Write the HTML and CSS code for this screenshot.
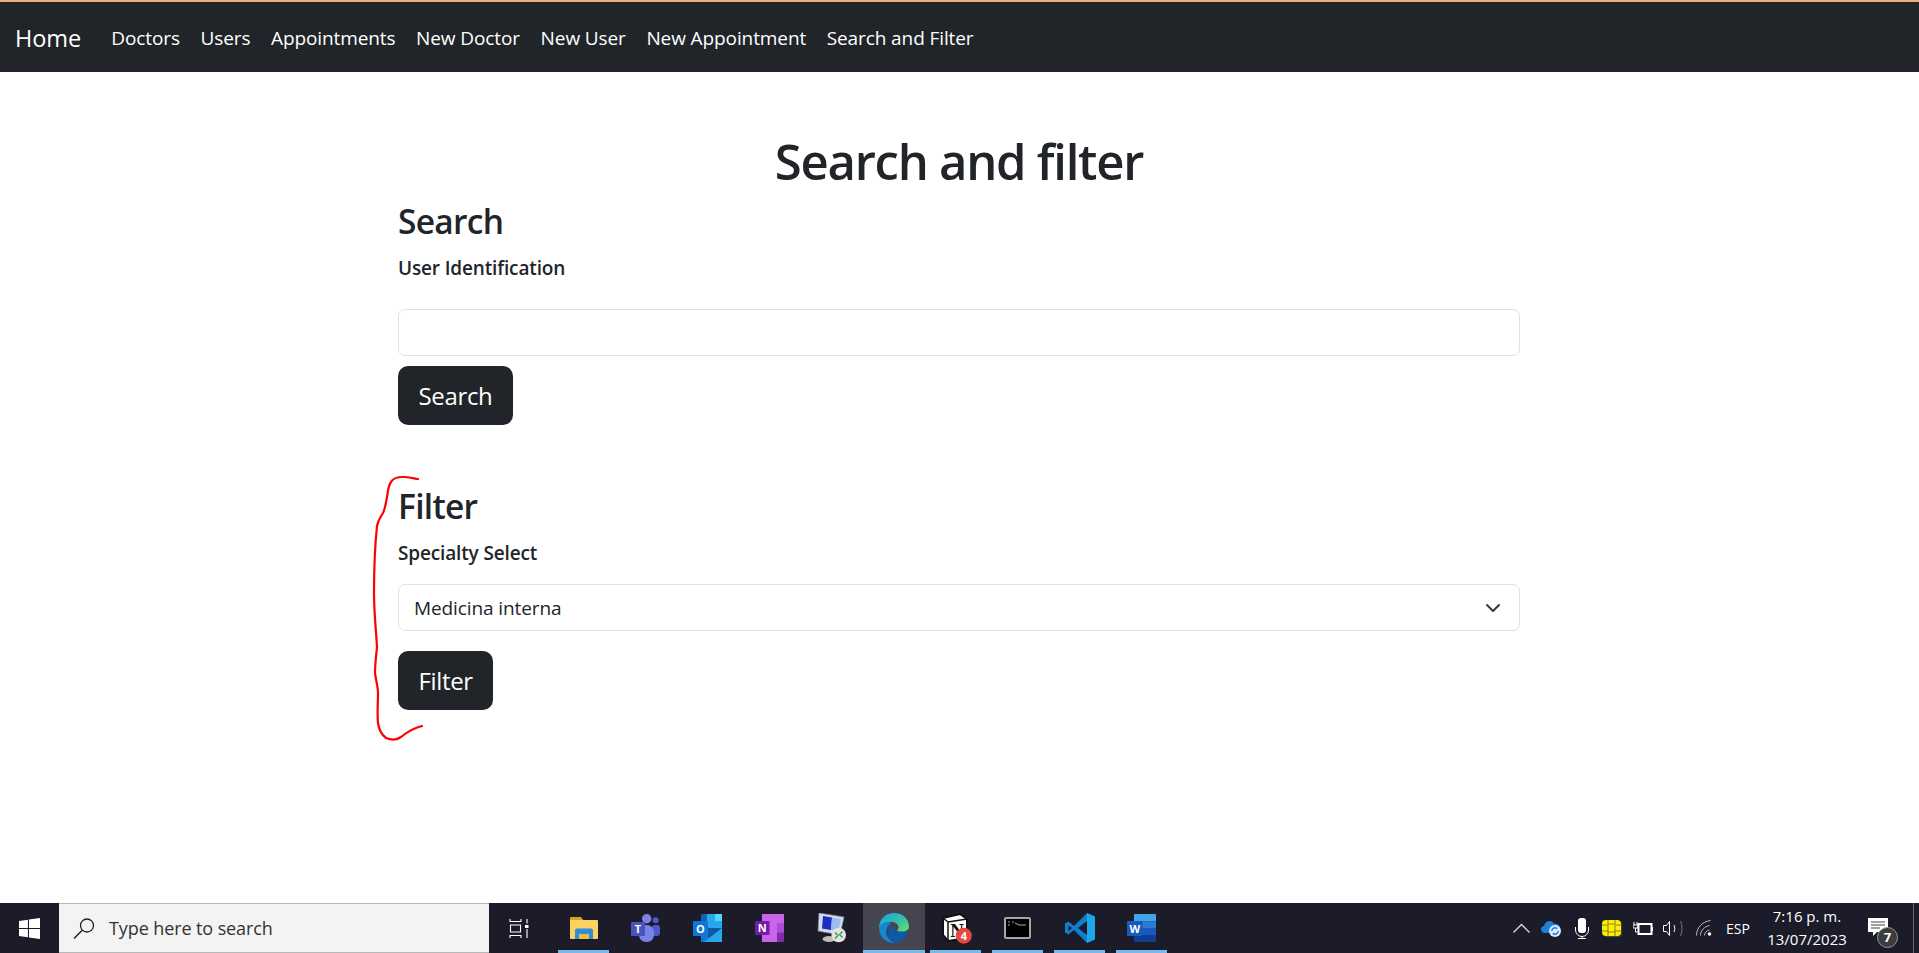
FILE: index.html
```html
<!DOCTYPE html>
<html lang="en">
<head>
    <meta charset="utf-8">
    <title>Search and filter</title>
    <link rel="stylesheet" href="styles.css">
</head>
<body>
    <nav class="navbar">
        <a class="brand" href="#">Home</a>
        <a class="nav-link" href="#">Doctors</a>
        <a class="nav-link" href="#">Users</a>
        <a class="nav-link" href="#">Appointments</a>
        <a class="nav-link" href="#">New Doctor</a>
        <a class="nav-link" href="#">New User</a>
        <a class="nav-link" href="#">New Appointment</a>
        <a class="nav-link" href="#">Search and Filter</a>
    </nav>

    <main class="page">
        <h1>Search and filter</h1>
        <section class="search-form">
            <h2>Search</h2>
            <label class="field-label" for="identification">User Identification</label>
            <input class="field" id="identification" type="text">
            <button class="btn" type="button">Search</button>
        </section>
        <section class="filter-form">
            <h2>Filter</h2>
            <label class="field-label" for="specialty">Specialty Select</label>
            <div class="field select" id="specialty">
                <span>Medicina interna</span>
                <svg class="chevron" width="16" height="16" viewBox="0 0 16 16"><path d="M2 5l6 6 6-6" fill="none" stroke="#343a40" stroke-width="2" stroke-linecap="round" stroke-linejoin="round"/></svg>
            </div>
            <button class="btn" type="button">Filter</button>
        </section>
    </main>

    <!-- hand drawn mark over the filter form -->
    <svg class="scribble" width="70" height="280" viewBox="360 470 70 280">
        <path d="M418 479 C412 478 408 477 403 477 C397 477 393 478 391 482 C388 486 388 492 387 497 C386 503 385 509 383 513 C380 518 378 520 377 526 C375 545 374 570 374 593 C374 612 376 630 377 647 C376 657 375 665 375 673 C376 681 378 687 378 693 C378 703 377 714 378 723 C379 730 382 735 386 738 C391 740 397 740 401 737 C407 732 414 728 422 726" fill="none" stroke="#f00" stroke-width="2.200" stroke-linecap="round"/>
    </svg>

    <footer class="taskbar">
        <div class="start">
            <svg width="21" height="21" viewBox="0 0 20 20"><path d="M0 2.800l8.500-1.200v7.900H0zM9.500 1.400L20 0v9.500H9.500zM0 10.500h8.500v7.900L0 17.200zM9.500 10.500H20V20L9.500 18.600z" fill="#fff"/></svg>
        </div>
        <div class="search-box">
            <svg width="22" height="21" viewBox="0 0 22 21"><circle cx="14" cy="7.500" r="6.500" fill="none" stroke="#222" stroke-width="1.300"/><path d="M9.200 12.300L1 20.500" stroke="#222" stroke-width="1.500"/></svg>
            <span>Type here to search</span>
        </div>
        <div class="task-view">
            <svg width="20" height="19" viewBox="0 0 20 19"><path d="M1 0v3M12 0v3M1 2.500h11M1 16.500h11M1 16v3M12 16v3M1.500 6h10v7h-10zM18 0v4.500M18 10v9" fill="none" stroke="#fff" stroke-width="1.100"/><rect x="16" y="6" width="3.500" height="3" fill="#fff"/></svg>
        </div>
        <div class="apps">
            <div class="app open">
                <svg width="28" height="22" viewBox="0 0 28 22"><path d="M0 1a1 1 0 0 1 1-1h10l3 4H0z" fill="#d9a21b"/><path d="M0 3h27a1 1 0 0 1 1 1v17a1 1 0 0 1-1 1H1a1 1 0 0 1-1-1z" fill="#fcd35f"/><path d="M5 22v-9a1.500 1.500 0 0 1 1.500-1.500h15A1.500 1.500 0 0 1 23 13v9h-4v-5H9v5z" fill="#2f8fd8"/><path d="M9 17h10v5H9z" fill="#f2bd3a"/></svg>
            </div>
            <div class="app">
                <svg width="29" height="28" viewBox="0 0 29 28"><circle cx="24.700" cy="6.300" r="3" fill="#5059c9"/><rect x="21" y="11" width="8" height="11" rx="3" fill="#5059c9"/><circle cx="15.700" cy="4.700" r="4.700" fill="#7b83eb"/><rect x="8" y="11" width="15" height="17" rx="7" fill="#7b83eb"/><rect x="0" y="8" width="14" height="14" rx="1" fill="#4b53bc"/><text x="7" y="19" class="tile-letter">T</text></svg>
            </div>
            <div class="app">
                <svg width="29" height="28" viewBox="0 0 29 28"><path d="M8 1a1 1 0 0 1 1-1h19a1 1 0 0 1 1 1v13H8z" fill="#0f64b4"/><path d="M14 0h8v14h-8z" fill="#28a8ea"/><path d="M22 0h7v7h-7z" fill="#50d9ff"/><path d="M22 7h7v7h-7z" fill="#28a8ea"/><path d="M8 14h21v14H8z" fill="#0f78d4"/><path d="M8 14l21 0v2L16 24z" fill="#0a5aa8"/><path d="M29 14v14H11z" fill="#28a8ea"/><rect x="0" y="7" width="15" height="15" rx="1" fill="#0f78d4"/><text x="7.500" y="18.500" class="tile-letter">O</text></svg>
            </div>
            <div class="app">
                <svg width="29" height="28" viewBox="0 0 29 28"><path d="M7 0h22v28H7z" fill="#ca64ea"/><path d="M22 9h7v9.500h-7z" fill="#ae4bd5"/><path d="M22 18.500h7V28h-7z" fill="#7f2ca8"/><rect x="0" y="7" width="14.500" height="14" rx="1" fill="#7719aa"/><text x="7.200" y="18" class="tile-letter">N</text></svg>
            </div>
            <div class="app">
                <svg width="30" height="30" viewBox="0 0 30 30"><path d="M2 0l25 4-4 18-22-4z" fill="#d5dbe8" stroke="#7f8797" stroke-width=".7"/><path d="M6 3l9 1.500-1 12.500-9-1.600z" fill="#1a2ec4"/><path d="M15 4.500l9 1.500-3 12.800-7-1.800z" fill="#9dbcf0"/><ellipse cx="12" cy="26" rx="6.500" ry="3" fill="#bdbdbd"/><circle cx="21.700" cy="22" r="7.300" fill="#e3e3e3"/><path d="M18 19.500l3 3-3 3M25.500 18.500l-3 3 3 3" fill="none" stroke="#2f9e44" stroke-width="1.300"/></svg>
            </div>
            <div class="app active">
                <svg width="30" height="30" viewBox="0 0 30 30"><defs><linearGradient id="edge-top" x1="0" y1="0" x2="1" y2="1"><stop offset="0" stop-color="#1b9de2"/><stop offset=".55" stop-color="#35c1a5"/><stop offset="1" stop-color="#6fde5f"/></linearGradient></defs><path d="M0 14C1 5 7 0 15 0c9 0 15 6 15 14 0 3-3 5-7 5-3 0-5-1-5-2 2-1 2-4 0-6-4-3-10-3-14 1-1 1-3 1-4 2z" fill="url(#edge-top)"/><path d="M0 14c3-5 9-6 12-4-3 2-5 5-5 9 0 4 3 8 8 11C7 30 0 24 0 14z" fill="#1187d8"/><path d="M9 19c0-3 2-6 5-7-1 2 0 5 4 6 4 1 9 1 11-2-1 8-7 14-14 14-4-2-6-7-6-11z" fill="#0c5aa6"/></svg>
            </div>
            <div class="app open">
                <svg width="32" height="32" viewBox="0 0 32 32"><path d="M3 6l17-4 7 5v19l-19 3-5-6z" fill="#fff" stroke="#111" stroke-width="2"/><path d="M8 10l19-3M8 10v19M3 6l5 4" fill="none" stroke="#111" stroke-width="1.500"/><text x="17" y="25" class="notion-letter">N</text><circle class="badge-dot" cx="23.800" cy="23.700" r="8"/><text x="23.800" y="27.700" class="badge-count">4</text></svg>
            </div>
            <div class="app open">
                <svg width="27" height="22" viewBox="0 0 27 22"><rect x="1" y="1" width="25" height="20" rx="1" fill="#000" stroke="#a5a5a5" stroke-width="2"/><path d="M4 5h2M4 8h2M8 5h2M11 6l4 2h7" fill="none" stroke="#aaa"/></svg>
            </div>
            <div class="app open">
                <svg width="30" height="30" viewBox="0 0 30 30"><path d="M22 0L9 13 3.500 8.500 0 10.500v9L3.500 21.500 9 17l13 13z" fill="#0e7fcb"/><path d="M3.500 12.500L7 15l-3.500 3z" fill="#1b1b29"/><path d="M22 8v14l-9-7z" fill="#1b1b29"/><path d="M22 0l8 3.500v23L22 30z" fill="#1fa5ee"/></svg>
            </div>
            <div class="app open">
                <svg width="29" height="28" viewBox="0 0 29 28"><path d="M7 1a1 1 0 0 1 1-1h20a1 1 0 0 1 1 1v6.500H7z" fill="#41a5ee"/><path d="M7 7.500h22V14H7z" fill="#2b7cd3"/><path d="M7 14h22v7H7z" fill="#185abd"/><path d="M7 21h22v6a1 1 0 0 1-1 1H8a1 1 0 0 1-1-1z" fill="#103f91"/><rect x="0" y="7" width="15.500" height="15" rx="1" fill="#185abd"/><text x="7.700" y="18.500" class="tile-letter">W</text></svg>
            </div>
        </div>
        <div class="tray">
            <div class="tray-slot"><svg width="17" height="10" viewBox="0 0 17 10"><path d="M.5 9.500l8-8 8 8" fill="none" stroke="#ddd" stroke-width="1.300"/></svg></div>
            <div class="tray-slot"><svg width="21" height="17" viewBox="0 0 21 17"><path d="M3 13C-1 12-1 6 3 6c1-5 8-7 10-2 3-1 6 1 6 4v5z" fill="#1e7fd6"/><circle cx="14" cy="11" r="6" fill="#d8ecfb"/><path d="M10.800 11a3.200 3.200 0 0 1 5.500-2.200M17.200 11a3.200 3.200 0 0 1-5.500 2.200" fill="none" stroke="#1e7fd6" stroke-width="1.500"/></svg></div>
            <div class="tray-slot"><svg width="14" height="21" viewBox="0 0 14 21"><rect x="3" y="0" width="8" height="15" rx="3" fill="#fff"/><path d="M.5 9v3a6.500 6.500 0 0 0 13 0V9M7 18.500V20.500M3 20.500h8" fill="none" stroke="#fff"/></svg></div>
            <div class="tray-slot"><svg width="20" height="17" viewBox="0 0 20 17"><rect x="1" y="1" width="19" height="16" rx="4" fill="#444"/><rect x="0" y="0" width="19" height="16" rx="4" fill="#ffee00"/><path d="M6 0v4M13 0v4M0 5h6v6H0M19 5h-6v6h6M6 11v5M13 11v5M6 4h7M6 12h7" fill="none" stroke="#6b6b20" stroke-width=".8"/></svg></div>
            <div class="tray-slot"><svg width="20" height="15" viewBox="0 0 20 15"><path d="M1 1v3M4 1v3M0 4h5v3H0zM2.500 7v4h2" fill="none" stroke="#fff"/><rect x="5.500" y="3" width="13" height="10" fill="none" stroke="#fff" stroke-width="2"/><path d="M19.500 6v4" stroke="#fff"/></svg></div>
            <div class="tray-slot"><svg width="20" height="17" viewBox="0 0 20 17"><path d="M.5 5.500h3l3-4v14l-3-4h-3z" fill="none" stroke="#fff"/><path d="M11 5c1 2 1 5 0 7" fill="none" stroke="#fff"/><path d="M17.500 1c2 5 2 10 0 15" fill="none" stroke="#777"/></svg></div>
            <div class="tray-slot"><svg width="16" height="16" viewBox="0 0 16 16"><path d="M.5 15.500C.5 8 6 1.500 14.500.5M4.500 15.500c0-5 4-9 9-10M8.500 15.500c0-2.500 2-5 5-5.500" fill="none" stroke="#bbb"/><circle cx="13.500" cy="14" r="1.800" fill="#fff"/></svg></div>
            <span class="lang">ESP</span>
            <div class="clock">
                <span>7:16 p. m.</span>
                <span>13/07/2023</span>
            </div>
            <div class="notify">
                <svg width="20" height="18" viewBox="0 0 20 18"><path d="M0 0h20v14H9l-4 4v-4H0z" fill="#fff"/><path d="M3 4h14M3 7h14M3 10h9" stroke="#444"/></svg>
                <span class="notify-count">7</span>
            </div>
            <div class="show-desktop"></div>
        </div>
    </footer>
</body>
</html>
```

FILE: styles.css
```css
* {
    box-sizing: border-box;
}

html, body {
    height: 100%;
}

body {
    margin: 0;
    display: flex;
    flex-direction: column;
    position: relative;
    overflow: hidden;
    background: #fff;
    color: #212529;
    font-family: "Open Sans", "Liberation Sans", sans-serif;
}

/* navbar */
.navbar {
    height: 72px;
    flex: none;
    display: flex;
    align-items: center;
    padding-left: 15px;
    padding-top: 1px;
    background: #212529;
    border-top: 2px solid #e9b27c;
}

.navbar a {
    color: #fff;
    text-decoration: none;
    white-space: nowrap;
}

.brand {
    font-size: 23.5px;
    letter-spacing: -0.1px;
    margin-right: 20px;
}

.nav-link {
    font-size: 19px;
    letter-spacing: -0.1px;
    padding: 0 10.300px;
}

/* page */
.page {
    flex: 1;
    width: 1122px;
    padding-top: 1px;
    margin-left: 398px;
}

h1 {
    margin: 58px 0 0;
    height: 70px;
    font-size: 49px;
    line-height: 60px;
    font-weight: 600;
    text-align: center;
    letter-spacing: -1.250px;
}

h2 {
    margin: 0;
    height: 50px;
    font-size: 33.500px;
    line-height: 41px;
    font-weight: 600;
    letter-spacing: -0.7px;
}

.field-label {
    display: block;
    height: 58px;
    padding-top: 4px;
    font-size: 19px;
    line-height: 26px;
    font-weight: 600;
    letter-spacing: -0.150px;
}

.field {
    display: flex;
    align-items: center;
    justify-content: space-between;
    width: 100%;
    height: 47px;
    border: 1px solid #dee2e6;
    border-radius: 7px;
    background: #fff;
    font-size: 19px;
    padding: 0 16px 0 15px;
}

.select {
    letter-spacing: -0.1px;
}

.chevron {
    margin-right: 2px;
}

.btn {
    display: block;
    height: 59px;
    margin-top: 10px;
    padding: 0 20.500px;
    border: 0;
    border-radius: 10px;
    background: #212529;
    color: #fff;
    font-family: inherit;
    font-size: 24px;
    letter-spacing: -0.350px;
}

.search-form {
    height: 285px;
}

.filter-form .field-label {
    height: 48px;
}

.filter-form .field + .btn {
    margin-top: 20px;
}

.scribble {
    position: absolute;
    left: 360px;
    top: 470px;
}

/* windows taskbar */
.taskbar {
    height: 50px;
    flex: none;
    display: flex;
    background: #1b1b29;
    color: #fff;
    font-size: 15px;
}

.start {
    width: 59px;
    display: flex;
    align-items: center;
    justify-content: center;
}

.search-box {
    width: 430px;
    display: flex;
    align-items: center;
    gap: 14px;
    padding-left: 14px;
    background: #f3f3f3;
    border-top: 1px solid #b8b8b8;
    border-bottom: 1px solid #b8b8b8;
    color: #333;
    font-size: 18px;
    letter-spacing: -0.1px;
}

.task-view {
    width: 63.500px;
    padding-right: 4px;
    display: flex;
    align-items: center;
    justify-content: center;
}

.apps {
    display: flex;
}

.app {
    width: 62px;
    position: relative;
    display: flex;
    align-items: center;
    justify-content: center;
}

.app.open::after,
.app.active::after {
    content: "";
    position: absolute;
    left: 5.500px;
    right: 5.500px;
    bottom: 0;
    height: 3px;
    background: #76b9ed;
}

.app.active {
    background: #45454f;
}

.app.active::after {
    left: 0;
    right: 0;
}

.tile-letter {
    fill: #fff;
    font-size: 11px;
    font-weight: 700;
    text-anchor: middle;
}

.notion-letter {
    fill: #111;
    font-family: "Liberation Serif", serif;
    font-size: 19px;
    font-weight: 700;
    text-anchor: middle;
}

.badge-dot {
    fill: #e5483d;
}

.badge-count {
    fill: #fff;
    font-size: 11px;
    font-weight: 700;
    text-anchor: middle;
}

.tray {
    margin-left: auto;
    display: flex;
    align-items: center;
}

.tray-slot {
    width: 30.400px;
    display: flex;
    align-items: center;
    justify-content: center;
}

.lang {
    width: 38.200px;
    font-size: 14px;
    text-align: center;
}

.clock {
    display: flex;
    flex-direction: column;
    align-items: center;
    width: 100px;
    line-height: 23px;
}

.notify {
    position: relative;
    align-self: stretch;
    width: 56px;
    padding: 15px 0 0 11px;
}

.notify svg {
    display: block;
}

.notify-count {
    position: absolute;
    left: 20px;
    top: 24px;
    width: 21px;
    height: 21px;
    border-radius: 50%;
    background: #3c3c3c;
    border: 1px solid #999;
    font-size: 13px;
    font-weight: 700;
    line-height: 19px;
    text-align: center;
}

.show-desktop {
    width: 6px;
    align-self: stretch;
    border-left: 1px solid #666;
}
```
